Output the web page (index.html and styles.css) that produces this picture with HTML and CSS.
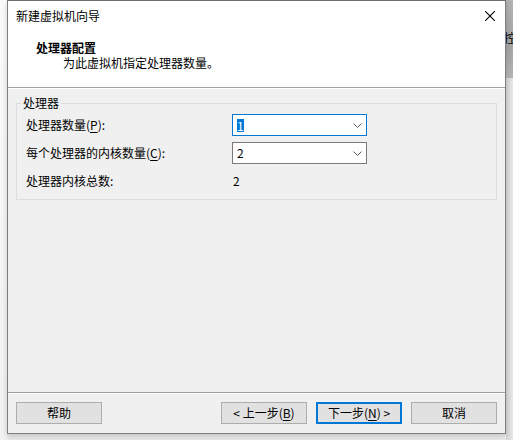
FILE: index.html
```html
<!DOCTYPE html>
<html lang="zh-CN">
<head>
<meta charset="utf-8">
<title>新建虚拟机向导</title>
<link rel="stylesheet" href="styles.css">
</head>
<body>
<div class="screen">
  <div class="side-left"></div>
  <div class="dialog">
    <div class="top">
      <div class="titlebar">
        <span class="title">新建虚拟机向导</span>
        <svg class="close" width="10" height="10" viewBox="0 0 10 10"><path d="M0 0L10 10M10 0L0 10" stroke="#000" stroke-width="1.1" fill="none"/></svg>
      </div>
      <div class="header">
        <div class="h-title">处理器配置</div>
        <div class="h-sub">为此虚拟机指定处理器数量。</div>
      </div>
    </div>
    <div class="sep"></div>
    <div class="body">
      <fieldset class="group">
        <legend>处理器</legend>
        <div class="rows">
          <div class="row">
            <span class="label">处理器数量(<u>P</u>):</span>
            <div class="combo focus">
              <span class="sel">1</span>
              <svg class="chev" width="9" height="5" viewBox="0 0 9 5"><polyline points="0.5,0.5 4.5,4.5 8.5,0.5" stroke="#5f5f5f" stroke-width="1" fill="none"/></svg>
            </div>
          </div>
          <div class="row">
            <span class="label">每个处理器的内核数量(<u>C</u>):</span>
            <div class="combo">
              <span class="val">2</span>
              <svg class="chev" width="9" height="5" viewBox="0 0 9 5"><polyline points="0.5,0.5 4.5,4.5 8.5,0.5" stroke="#5f5f5f" stroke-width="1" fill="none"/></svg>
            </div>
          </div>
          <div class="row">
            <span class="label">处理器内核总数:</span>
            <span class="value">2</span>
          </div>
        </div>
      </fieldset>
    </div>
    <div class="sep"></div>
    <div class="footer">
      <button class="btn">帮助</button>
      <div class="btn-group">
        <button class="btn">&lt; 上一步(<u>B</u>)</button>
        <button class="btn default">下一步(<u>N</u>) &gt;</button>
        <button class="btn">取消</button>
      </div>
    </div>
  </div>
  <div class="side-right">
    <div class="shade"><span class="peek">控</span></div>
  </div>
</div>
</body>
</html>
```

FILE: styles.css
```css
html, body {
  margin: 0;
  padding: 0;
}
body {
  width: 513px;
  height: 440px;
  overflow: hidden;
  background: #ebebeb;
  font-family: "Noto Sans CJK SC", "Microsoft YaHei UI", sans-serif;
  font-size: 12px;
  color: #000;
}
.screen {
  display: flex;
  width: 513px;
  height: 440px;
  align-items: flex-start;
}
.side-left {
  width: 7px;
  height: 440px;
  background: linear-gradient(#fbfbfb, #f2f2f2);
}
.dialog {
  position: relative;
  z-index: 1;
  width: 499px;
  height: 434px;
  box-sizing: border-box;
  border: 1px solid #7f7f7f;
  border-top-color: #6c6c6c;
  background: #f0f0f0;
  display: flex;
  flex-direction: column;
  box-shadow: 0 2px 6px rgba(0,0,0,0.18);
}
.top {
  background: #fff;
  height: 86px;
  display: flex;
  flex-direction: column;
}
.titlebar {
  height: 29px;
  padding: 0 10px 0 8px;
  display: flex;
  align-items: center;
  justify-content: space-between;
  line-height: 16px;
}
.close {
  display: block;
}
.header {
  flex: 1;
  padding: 10px 0 0 28px;
  line-height: 15px;
}
.h-title {
  font-weight: bold;
}
.h-sub {
  margin-left: 27px;
}
.sep {
  height: 0;
  border-top: 1px solid #a0a0a0;
  border-bottom: 1px solid #ffffff;
}
.body {
  flex: 1;
  padding: 7px 8px 0 8px;
}
.group {
  margin: 0;
  border: 1px solid #dcdcdc;
  padding: 4px 0 7px 0;
  min-inline-size: 0;
}
.group legend {
  padding: 0 2px;
  margin-left: 4px;
  line-height: 14px;
}
.rows {
  display: flex;
  flex-direction: column;
  gap: 6px;
  padding-left: 9px;
}
.row {
  display: flex;
  align-items: center;
  height: 22px;
}
.label {
  width: 206px;
  line-height: 16px;
}
.label u, .btn u {
  text-underline-offset: 2px;
}
.combo {
  width: 135px;
  height: 22px;
  box-sizing: border-box;
  border: 1px solid #7a7a7a;
  background: #fff;
  display: flex;
  align-items: center;
  justify-content: space-between;
  padding: 0 4px;
}
.combo.focus {
  border-color: #0078d7;
}
.sel {
  background: #0078d7;
  color: #fff;
  line-height: 13px;
  height: 13px;
  padding-right: 0;
}
.val {
  line-height: 16px;
}
.chev {
  display: block;
  margin-top: 1px;
}
.value {
  padding-left: 1px;
  line-height: 16px;
}
.footer {
  height: 39px;
  box-sizing: border-box;
  padding: 8px 8px 9px 8px;
  display: flex;
  justify-content: space-between;
  align-items: flex-start;
}
.btn-group {
  display: flex;
  gap: 9px;
}
.btn {
  width: 86px;
  height: 22px;
  box-sizing: border-box;
  border: 1px solid #adadad;
  background: #e1e1e1;
  font-family: "Noto Sans CJK SC", "Microsoft YaHei UI", sans-serif;
  font-size: 12px;
  color: #000;
  padding: 0;
  line-height: 16px;
  border-radius: 0;
}
.btn.default {
  border: 2px solid #0078d7;
}
.side-right {
  width: 7px;
  height: 440px;
  overflow: hidden;
  background: linear-gradient(90deg, #d6d6d6, #e8e8e8);
}
.shade {
  height: 78px;
  background: linear-gradient(#b3b3b3, #a4a4a4 60%, #b5b5b5);
  padding-top: 30px;
  box-sizing: border-box;
  overflow: hidden;
}
.peek {
  display: block;
  margin-left: -2px;
  line-height: 16px;
  white-space: nowrap;
}
```
